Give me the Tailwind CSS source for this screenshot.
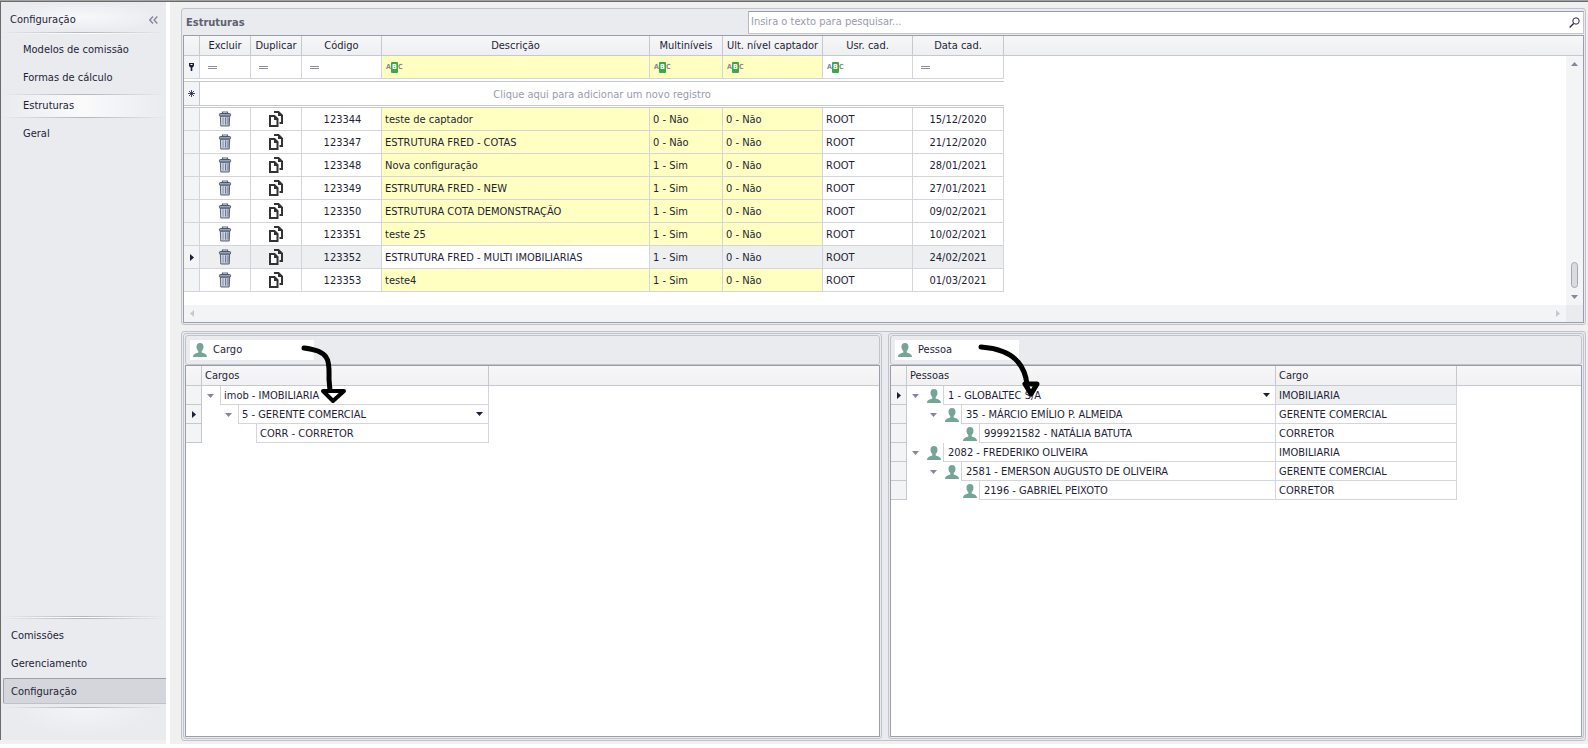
<!DOCTYPE html>
<html lang="pt-BR">
<head>
<meta charset="utf-8">
<title>Estruturas</title>
<script src="https://cdn.jsdelivr.net/npm/@tailwindcss/browser@4"></script>
</head>
<body class="bg-white">
<svg class="hidden" aria-hidden="true">
  <symbol id="trash" viewBox="0 0 14 16">
    <path d="M4.500 2.500v-1.500h5v1.500" fill="none" stroke="#5b6478" stroke-width="1.200"/>
    <path d="M2.300 5h9.400l-.5 10H2.800z" fill="#b9c3d3" stroke="#5b6478"/>
    <rect x="1.400" y="2.500" width="11.200" height="2.500" rx="1" fill="#98a3b7" stroke="#4d566b"/>
    <path d="M5 6.500v7M7.500 6.500v7M10 6.500v7" stroke="#66718a" stroke-width=".9"/>
    <path d="M3.900 6v8M6.200 6v8" stroke="#dfe5ee" stroke-width=".8"/>
  </symbol>
  <symbol id="copy" viewBox="0 0 16 16">
    <path d="M2 5h4.500l3 3v7H2z" fill="#fff" stroke="#333" stroke-width="2"/>
    <path d="M6 4.500V9h4.500z" fill="#333"/>
    <path d="M6 1h4.500l3.500 3.500V12h-2.500" fill="none" stroke="#333" stroke-width="2"/>
    <path d="M10 .500V5h4.500z" fill="#333"/>
  </symbol>
  <symbol id="person" viewBox="0 0 14 14">
    <path d="M7 0c2.300 0 3.500 1.500 3.500 3.800 0 2-.8 3.500-1.800 4.300v1.300c1.500.6 5.300.9 5.300 4.600H0c0-3.700 3.800-4 5.300-4.600V8.100c-1-.8-1.800-2.300-1.800-4.300C3.500 1.500 4.700 0 7 0z" fill="#75a596"/>
  </symbol>
  <symbol id="eq" viewBox="0 0 9 3"><path d="M0 .5h9M0 2.500h9" stroke="#8b8ca0"/></symbol>
  <symbol id="down" viewBox="0 0 7 4"><path d="M0 0h7L3.500 4z" fill="currentColor"/></symbol>
  <symbol id="right" viewBox="0 0 4 7"><path d="M0 0v7l4-3.500z" fill="currentColor"/></symbol>
</svg>

<div class="relative flex h-screen flex-col overflow-hidden border-b-4 border-white bg-[#f0f0f0] font-['DejaVu_Sans_Condensed','DejaVu_Sans',sans-serif] text-[11px] leading-[14px] text-[#1e1e37]">
  <div class="h-[2px] shrink-0 border-b border-[#6b6b6b] bg-[#a3a3a3]"></div>
  <div class="flex min-h-0 flex-1">

    <aside class="mb-1 flex w-[166px] shrink-0 flex-col border-l border-[#6b6b6b] bg-[#e9ebef]">
      <div class="flex h-[30px] items-center justify-between bg-radial from-[#f8f8fa] to-[#e9ebef] to-70% pt-[5px] pr-2 pl-[9px]">
        <h2>Configuração</h2>
        <button type="button" aria-label="Recolher">
          <svg class="h-2 w-[9px]" viewBox="0 0 9 8"><path d="M4 .5L.8 4 4 7.500M8.300 .5L5.100 4l3.200 3.500" fill="none" stroke="#85869b" stroke-width="1.400"/></svg>
        </button>
      </div>
      <div class="h-px bg-linear-to-r from-transparent via-[#b3b5bf] to-transparent"></div>
      <div class="h-px bg-linear-to-r from-transparent via-white to-transparent"></div>
      <nav class="flex flex-col pt-[2px]">
        <a href="#" class="flex h-7 items-center pl-[22px]">Modelos de comissão</a>
        <a href="#" class="flex h-7 items-center pl-[22px]">Formas de cálculo</a>
        <div class="flex h-7 flex-col justify-center">
          <div class="h-px bg-linear-to-r from-transparent via-[#b3b5bf] to-transparent"></div>
          <a href="#" class="flex h-[22px] items-center bg-linear-to-r from-[#e9ebef] via-[#fafafb] to-[#e9ebef] pl-[22px]">Estruturas</a>
          <div class="h-px bg-linear-to-r from-transparent via-[#b3b5bf] to-transparent"></div>
        </div>
        <a href="#" class="flex h-7 items-center pl-[22px]">Geral</a>
      </nav>
      <div class="flex-1"></div>
      <div class="h-px bg-linear-to-r from-transparent via-[#b3b5bf] to-transparent"></div>
      <div class="h-px bg-linear-to-r from-transparent via-white to-transparent"></div>
      <div class="h-px bg-linear-to-r from-transparent via-[#b3b5bf] to-transparent"></div>
      <nav class="flex flex-col pt-[3px]">
        <a href="#" class="flex h-7 items-center pl-[10px]">Comissões</a>
        <a href="#" class="flex h-7 items-center pl-[10px]">Gerenciamento</a>
        <a href="#" class="ml-[2px] flex h-[26px] items-center rounded-l-xs border border-r-0 border-[#9d9fac] border-b-[#bfc1ca] bg-[#d4d6dc] pt-px pl-[7px]">Configuração</a>
      </nav>
      <div class="mt-[3px] h-px bg-linear-to-r from-transparent via-[#b3b5bf] to-transparent"></div>
      <div class="h-8 bg-radial-[at_50%_0%] from-[#f4f4f7] to-[#e9ebef] to-60%"></div>
    </aside>
    <div class="w-1 shrink-0 bg-white"></div>

    <main class="flex min-w-0 flex-1 flex-col gap-[6px] pt-[6px] pr-[2px] pb-[3px] pl-[11px]">

      <section class="flex h-[317px] shrink-0 flex-col rounded-[3px] border border-[#c0c3cc] bg-[#e9ebef] p-px">
        <div class="flex h-[25px] items-center">
          <h1 class="w-[565px] shrink-0 pl-[3px] font-bold text-[#5f6070]">Estruturas</h1>
          <label class="mb-px flex h-[23px] min-w-0 flex-1 items-center border border-[#c3c5ce] border-t-[#9a9bab] border-l-[#b5b7c2] bg-white pr-[3px] pl-[2px]">
            <input type="search" aria-label="Pesquisar" placeholder="Insira o texto para pesquisar..." class="min-w-0 flex-1 bg-transparent outline-none placeholder:text-[#9a9bab]">
            <svg class="h-[11px] w-[11px]" viewBox="0 0 11 11"><circle cx="7" cy="4" r="3.200" fill="none" stroke="#2b2b45"/><path d="M4.600 6.400L.6 10.400" stroke="#2b2b45" stroke-width="1.400"/></svg>
          </label>
        </div>
        <div class="relative flex min-h-0 flex-1 flex-col border border-[#9a9dab] bg-white">
          <div class="absolute inset-x-0 top-0 h-5 border-b border-[#c6c8d0] bg-linear-to-b from-[#f7f7f8] to-[#eeeff2]"></div>
          <div class="flex min-h-0 flex-1">
            <div class="relative min-w-0 flex-1 overflow-hidden">
              <table class="w-[820px] table-fixed border-separate border-spacing-0">
                <colgroup><col class="w-4"><col class="w-[51px]"><col class="w-[51px]"><col class="w-20"><col class="w-[268px]"><col class="w-[73px]"><col class="w-[100px]"><col class="w-[90px]"><col class="w-[91px]"></colgroup>
                <thead>
                  <tr class="h-5 *:border-r *:border-b *:border-[#c6c8d0] *:p-0 *:font-normal *:whitespace-nowrap">
                    <th></th><th>Excluir</th><th>Duplicar</th><th>Código</th><th>Descrição</th><th>Multiníveis</th><th>Ult. nível captador</th><th>Usr. cad.</th><th>Data cad.</th>
                  </tr>
                </thead>
                <tbody id="grid"></tbody>
              </table>
            </div>
            <div class="mt-5 flex w-[17px] flex-col items-center bg-[#f3f4f6] pt-[6px] pb-[6px] text-[#85869b]">
              <svg class="h-1 w-[7px] rotate-180"><use href="#down"/></svg>
              <div class="flex-1"></div>
              <div class="mb-[7px] h-[26px] w-[7px] rounded-full border border-[#a4a7b3] bg-[#d9dbe1]"></div>
              <svg class="h-1 w-[7px]"><use href="#down"/></svg>
            </div>
          </div>
          <div class="flex h-[17px] bg-[#e9ebef]">
            <div class="flex flex-1 items-center justify-between bg-[#f3f4f6] px-[6px] text-[#c6c8d0]">
              <svg class="h-[7px] w-1 rotate-180"><use href="#right"/></svg>
              <svg class="h-[7px] w-1"><use href="#right"/></svg>
            </div>
            <div class="w-[17px]"></div>
          </div>
        </div>
      </section>

      <div class="grid min-h-0 flex-1 grid-cols-[699fr_696fr] gap-[6px] rounded-[3px] border border-[#c0c3cc] bg-[#e9ebef] p-px">
        <section class="flex min-w-0 flex-col rounded-[3px] border border-[#c0c3cc] p-px">
          <div class="flex h-[30px] items-center rounded-[3px] border border-[#c0c3cc] pl-1">
            <h2 class="flex h-5 w-[124px] items-center gap-[6px] bg-white pl-[3px]"><svg class="h-[14px] w-[14px]"><use href="#person"/></svg>Cargo</h2>
          </div>
          <div class="relative flex-1 border border-[#9a9dab] bg-white">
            <div class="absolute inset-x-0 top-0 h-5 border-b border-[#c6c8d0] bg-linear-to-b from-[#f7f7f8] to-[#f1f1f3]"></div>
            <table class="relative w-[303px] table-fixed border-separate border-spacing-0">
              <colgroup><col class="w-4"><col></colgroup>
              <thead><tr class="h-5 *:border-r *:border-b *:border-[#c6c8d0] *:p-0 *:text-left *:font-normal"><th></th><th><span class="pl-[3px]">Cargos</span></th></tr></thead>
              <tbody id="cargos"></tbody>
            </table>
          </div>
        </section>

        <section class="flex min-w-0 flex-col rounded-[3px] border border-[#c0c3cc] p-px">
          <div class="flex h-[30px] items-center rounded-[3px] border border-[#c0c3cc] pl-1">
            <h2 class="flex h-5 w-[124px] items-center gap-[6px] bg-white pl-[3px]"><svg class="h-[14px] w-[14px]"><use href="#person"/></svg>Pessoa</h2>
          </div>
          <div class="relative flex-1 border border-[#9a9dab] bg-white">
            <div class="absolute inset-x-0 top-0 h-5 border-b border-[#c6c8d0] bg-linear-to-b from-[#f7f7f8] to-[#f1f1f3]"></div>
            <table class="relative w-[566px] table-fixed border-separate border-spacing-0">
              <colgroup><col class="w-4"><col><col class="w-[181px]"></colgroup>
              <thead><tr class="h-5 *:border-r *:border-b *:border-[#c6c8d0] *:p-0 *:text-left *:font-normal"><th></th><th><span class="pl-[3px]">Pessoas</span></th><th><span class="pl-[3px]">Cargo</span></th></tr></thead>
              <tbody id="pessoas"></tbody>
            </table>
          </div>
        </section>
      </div>
    </main>
  </div>

  <!-- Hand-drawn arrows laid over both tree panels -->
  <svg class="pointer-events-none absolute top-[340px] left-[295px] h-[70px] w-[60px]" viewBox="295 340 60 70" fill="none" stroke="#000" stroke-linecap="round" stroke-linejoin="round">
    <path d="M304 348c9 1 18 3 22 9 4 5 3 15 3 22l1 12" stroke-width="5"/>
    <path d="M323 391h21l-11 10z" stroke-width="4" fill="#fff"/>
  </svg>
  <svg class="pointer-events-none absolute top-[340px] left-[970px] h-[70px] w-[80px]" viewBox="970 340 80 70" fill="none" stroke="#000" stroke-linecap="round" stroke-linejoin="round">
    <path d="M981 347c13 1 28 4 37 15 6 7 8 14 9 22" stroke-width="5"/>
    <path d="M1025 384h12l-6 10z" stroke-width="5" fill="#fff"/>
  </svg>
</div>

<script>
const down = (c) => `<svg class="h-1 w-[7px] shrink-0 ${c}"><use href="#down"/></svg>`;
const current = '<svg class="mx-auto h-[7px] w-1 text-[#1e1e37]"><use href="#right"/></svg>';
const eq = '<svg class="ml-2 h-[3px] w-[9px]"><use href="#eq"/></svg>';
const abc = '<div class="ml-1 flex h-[11px] items-center font-[\'Liberation_Mono\',monospace] text-[7px] leading-[11px] font-bold text-[#85869b]"><span>A</span><span class="w-[7px] rounded-[1px] bg-[#3fa648] text-center text-white">B</span><span>C</span></div>';
const yellow = 'bg-[#ffffc1]';

// Main grid
const rows = [
  ['123344', 'teste de captador', '0 - Não', '15/12/2020'],
  ['123347', 'ESTRUTURA FRED - COTAS', '0 - Não', '21/12/2020'],
  ['123348', 'Nova configuração', '1 - Sim', '28/01/2021'],
  ['123349', 'ESTRUTURA FRED - NEW', '1 - Sim', '27/01/2021'],
  ['123350', 'ESTRUTURA COTA DEMONSTRAÇÃO', '1 - Sim', '09/02/2021'],
  ['123351', 'teste 25', '1 - Sim', '10/02/2021'],
  ['123352', 'ESTRUTURA FRED - MULTI IMOBILIARIAS', '1 - Sim', '24/02/2021', true],
  ['123353', 'teste4', '1 - Sim', '01/03/2021'],
];
const rowClass = 'h-[23px] *:border-r *:border-b *:border-[#d4d5dc] *:p-0';
const gap = (c) => `<tr><td colspan="9" class="border-b border-[#c6c8d0] bg-white p-0 ${c}"></td></tr>`;
let html = `<tr class="${rowClass}">
  <td class="bg-[#f3f4f6]"><svg class="mx-auto h-2 w-[7px]" viewBox="0 0 7 8"><path d="M1 0h5v3L4.300 4.800V8H2.700V4.800L1 3z" fill="#1e1e37"/><path d="M2.500 1.500h2" stroke="#fff"/></svg></td>
  <td>${eq}</td><td>${eq}</td><td>${eq}</td>
  <td class="${yellow}">${abc}</td><td class="${yellow}">${abc}</td><td class="${yellow}">${abc}</td><td>${abc}</td><td>${eq}</td></tr>`;
html += gap('h-[3px]');
html += `<tr class="h-6 *:border-b *:border-[#c6c8d0] *:p-0">
  <td class="border-r bg-[#f3f4f6]"><svg class="mx-auto h-[7px] w-[7px]" viewBox="0 0 7 7"><path d="M3.500 0v7M0 3.500h7M1 1l5 5M6 1L1 6" stroke="#1e1e37" stroke-width=".8"/></svg></td>
  <td colspan="8" class="text-center text-[#9a9bab]"><div class="pt-[2px]">Clique aqui para adicionar um novo registro</div></td></tr>`;
html += gap('h-[2px]');
for (const [code, name, multi, date, sel] of rows) {
  const plain = sel ? 'bg-[#edeff1]' : 'bg-white';
  const tint = sel ? 'bg-[#edeff1]' : yellow;
  html += `<tr class="${rowClass}">
    <td class="bg-[#f3f4f6]">${sel ? current : ''}</td>
    <td class="${plain}"><button type="button" aria-label="Excluir" class="mx-auto block"><svg class="h-4 w-[14px]"><use href="#trash"/></svg></button></td>
    <td class="${plain}"><button type="button" aria-label="Duplicar" class="mx-auto block"><svg class="h-4 w-4"><use href="#copy"/></svg></button></td>
    <td class="text-center ${plain}"><div class="pt-[2px] pl-[2px]">${code}</div></td>
    <td class="${sel ? 'bg-white' : yellow}"><div class="pt-[2px] pl-[3px]">${name}</div></td>
    <td class="${tint}"><div class="pt-[2px] pl-[3px]">${multi}</div></td>
    <td class="${tint}"><div class="pt-[2px] pl-[3px]">0 - Não</div></td>
    <td class="${plain}"><div class="pt-[2px] pl-[3px]">ROOT</div></td>
    <td class="text-center ${plain}"><div class="pt-[2px]">${date}</div></td></tr>`;
}
document.getElementById('grid').innerHTML = html;

// Tree rows: [level, text, has children, current, role]
const person = '<svg class="mr-[2px] ml-[2px] h-[14px] w-[14px] shrink-0"><use href="#person"/></svg>';
const pad = ['w-[18px]', 'w-[36px]', 'w-[54px]'];
function tree(id, data, icon) {
  document.getElementById(id).innerHTML = data.map(([level, text, open, sel, role]) => `<tr class="h-[19px] *:p-0">
    <td class="border-r border-b border-[#c6c8d0] bg-[#f3f4f6]">${sel ? current : ''}</td>
    <td class="border-r border-[#d4d5dc]"><div class="flex h-[19px] items-center">
      <div class="flex shrink-0 justify-end pr-[6px] ${pad[level]}">${open ? down('text-[#85869b]') : ''}</div>
      ${icon ? person : ''}
      <div class="flex h-full min-w-0 flex-1 items-center justify-between border-b border-l border-[#d4d5dc] bg-white pr-[5px] ${icon ? 'pl-1' : 'pl-[3px]'}"><span class="pt-px whitespace-nowrap">${text}</span>${sel ? down('text-[#1e1e37]') : ''}</div>
    </div></td>
    ${role ? `<td class="border-r border-b border-[#d4d5dc] ${sel ? 'bg-[#edeff1]' : 'bg-white'}"><div class="pt-px pl-[3px]">${role}</div></td>` : ''}
  </tr>`).join('');
}
tree('cargos', [
  [0, 'imob - IMOBILIARIA', true, false],
  [1, '5 - GERENTE COMERCIAL', true, true],
  [2, 'CORR - CORRETOR', false, false],
], false);
tree('pessoas', [
  [0, '1 - GLOBALTEC S/A', true, true, 'IMOBILIARIA'],
  [1, '35 - MÁRCIO EMÍLIO P. ALMEIDA', true, false, 'GERENTE COMERCIAL'],
  [2, '999921582 - NATÁLIA BATUTA', false, false, 'CORRETOR'],
  [0, '2082 - FREDERIKO OLIVEIRA', true, false, 'IMOBILIARIA'],
  [1, '2581 - EMERSON AUGUSTO DE OLIVEIRA', true, false, 'GERENTE COMERCIAL'],
  [2, '2196 - GABRIEL PEIXOTO', false, false, 'CORRETOR'],
], true);
</script>
</body>
</html>
